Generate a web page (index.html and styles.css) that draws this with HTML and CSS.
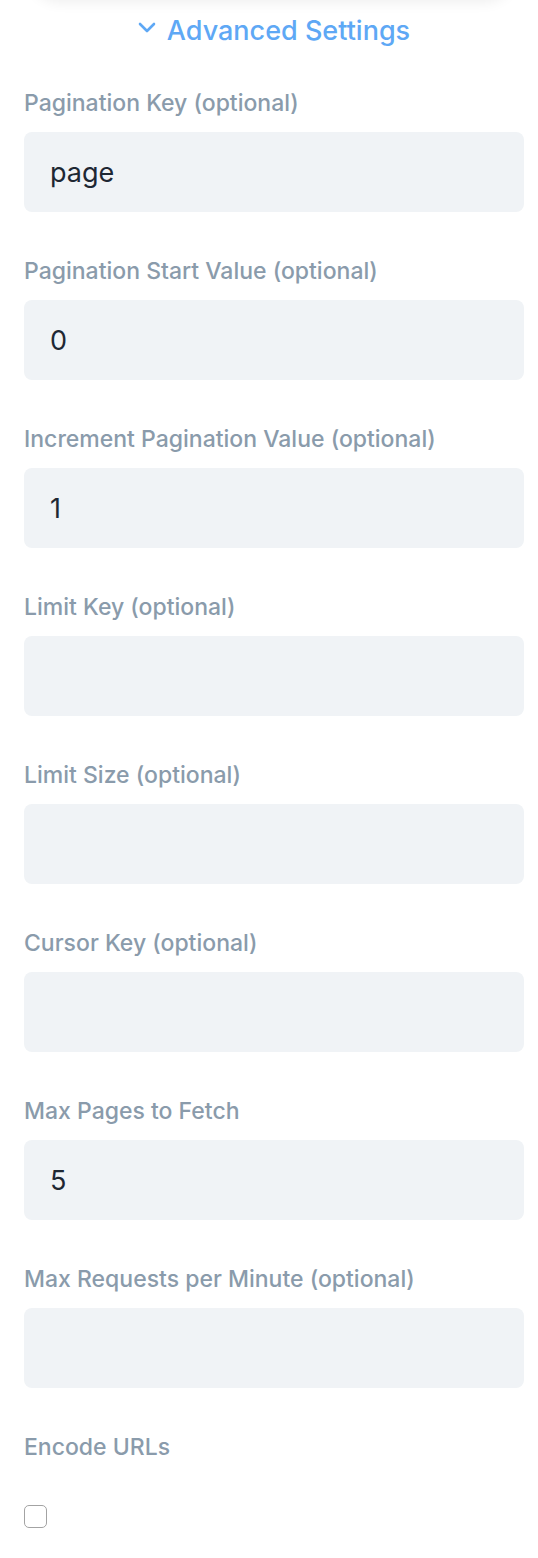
FILE: index.html
```html
<!DOCTYPE html>
<html>
	<head>
		<meta charset="utf-8">
		<title>Advanced Settings</title>
		<link rel="stylesheet" href="styles.css">
	</head>
	<body>
		<!-- 上方卡片（只露出阴影） -->
		<div class="top-card"></div>

		<!-- 高级设置切换按钮 -->
		<button class="toggle" type="button">
			<svg class="chevron" width="18" height="12" viewBox="0 0 18 12">
				<path d="M2 2 L9 9 L16 2" fill="none" stroke="currentColor" stroke-width="2.6" stroke-linecap="round" stroke-linejoin="round"/>
			</svg>
			<span>Advanced Settings</span>
		</button>

		<form class="settings">
			<div class="field">
				<label class="label">Pagination Key (optional)</label>
				<input class="input" type="text" value="page">
			</div>
			<div class="field">
				<label class="label">Pagination Start Value (optional)</label>
				<input class="input" type="text" value="0">
			</div>
			<div class="field">
				<label class="label">Increment Pagination Value (optional)</label>
				<input class="input" type="text" value="1">
			</div>
			<div class="field">
				<label class="label">Limit Key (optional)</label>
				<input class="input" type="text" value="">
			</div>
			<div class="field">
				<label class="label">Limit Size (optional)</label>
				<input class="input" type="text" value="">
			</div>
			<div class="field">
				<label class="label">Cursor Key (optional)</label>
				<input class="input" type="text" value="">
			</div>
			<div class="field">
				<label class="label">Max Pages to Fetch</label>
				<input class="input" type="text" value="5">
			</div>
			<div class="field">
				<label class="label">Max Requests per Minute (optional)</label>
				<input class="input" type="text" value="">
			</div>
			<div class="field">
				<label class="label">Encode URLs</label>
				<input class="check" type="checkbox">
			</div>
		</form>
	</body>
</html>
```

FILE: styles.css
```css
*{
	margin: 0;
	padding: 0;
	box-sizing: border-box;
}

body{
	font-family: Inter, "Noto Sans", sans-serif;
	background-color: #fff;
	padding: 0 14px 0 24px;
}

/* 上面那张卡片，只露出底部阴影 */
.top-card{
	height: 40px;
	margin: -40px 10px 0 6px;
	background-color: #fff;
	border-radius: 0 0 30px 30px;
	box-shadow: 0 2px 14px rgba(0, 0, 0, 0.07);
}

/* 切换按钮 */
.toggle{
	display: flex;
	align-items: center;
	justify-content: center;
	gap: 11px;
	width: 100%;
	height: 60px;
	border: none;
	background: none;
	color: #5ea8f5;
	font-family: inherit;
	font-size: 27px;
	font-weight: 500;
	cursor: pointer;
}

.chevron{
	margin-top: -4px;
}

.settings{
	display: flex;
	flex-direction: column;
	gap: 44px;
	margin-top: 28px;
}

.field{
	display: flex;
	flex-direction: column;
	gap: 14px;
}

.label{
	height: 30px;
	line-height: 30px;
	font-size: 23px;
	font-weight: 500;
	color: #8a9bab;
}

.input{
	height: 80px;
	width: 100%;
	padding: 0 26px;
	border: none;
	border-radius: 8px;
	background-color: #f0f3f6;
	font-family: inherit;
	font-size: 27px;
	color: #1e2733;
	outline: none;
}

.check{
	width: 23px;
	height: 23px;
	margin-top: 29px;
	appearance: none;
	border: 1.5px solid #a3a3a3;
	border-radius: 5px;
	background-color: #fff;
}
```
